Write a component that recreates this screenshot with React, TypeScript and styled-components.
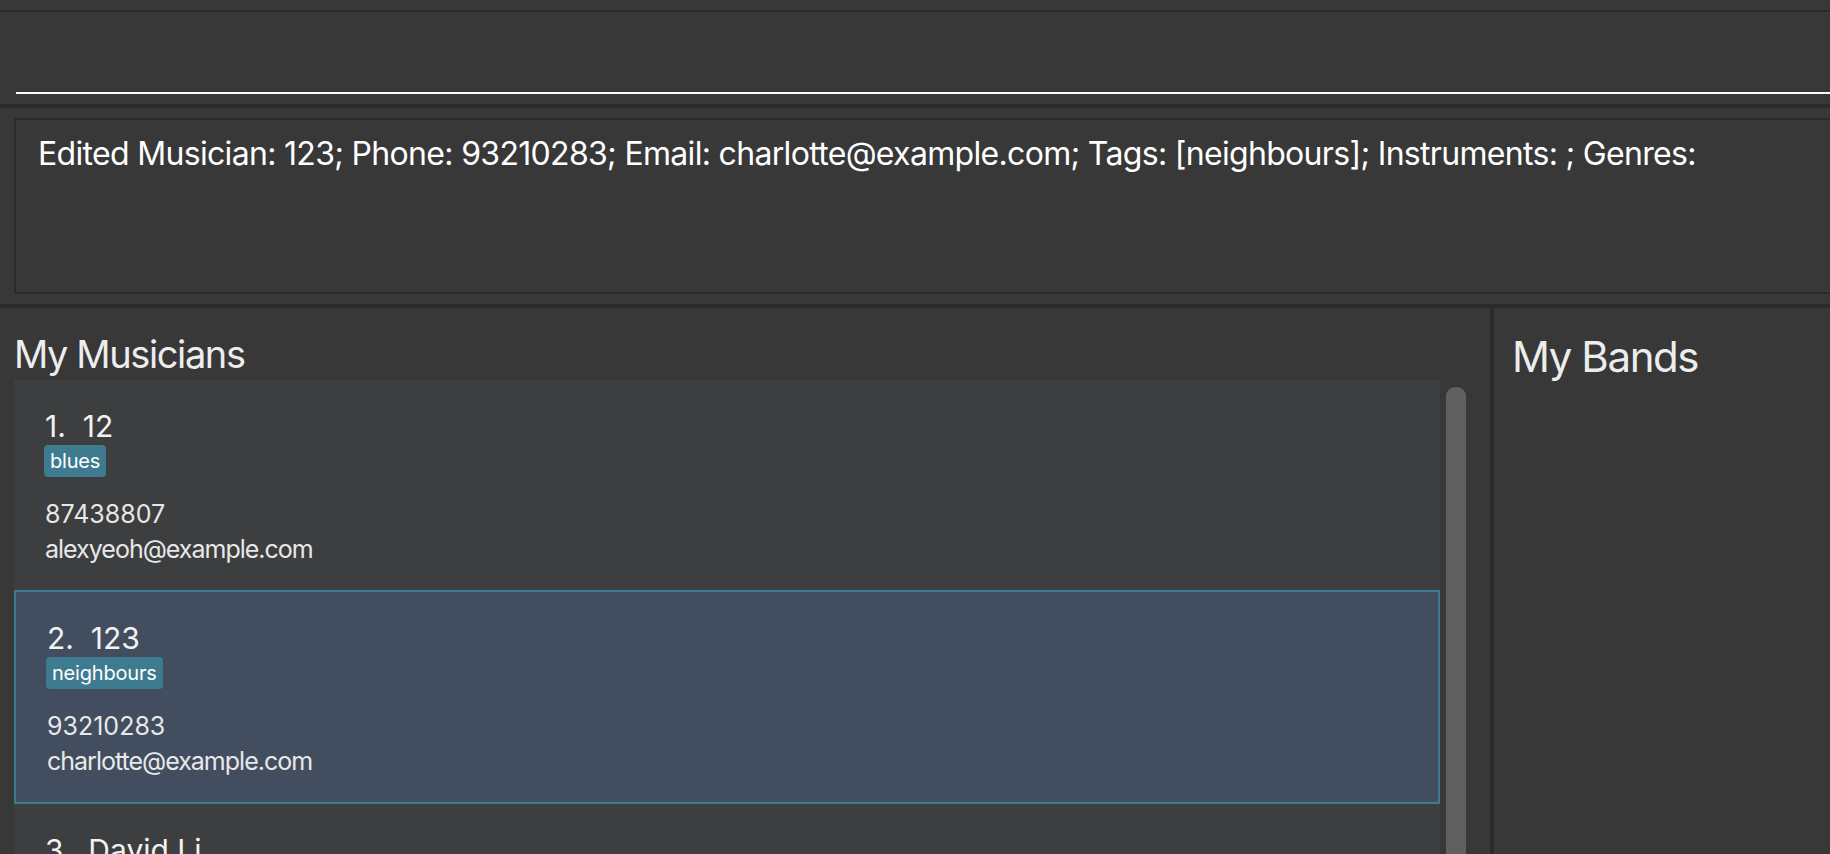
import React from "react";
import styled, { createGlobalStyle } from "styled-components";

const GlobalStyle = createGlobalStyle`
  html, body {
    margin: 0;
    padding: 0;
    background: #383838;
    overflow: hidden;
  }
  body {
    font-family: Inter, "Noto Sans", sans-serif;
  }
`;

const Window = styled.div`
  width: 1860px;
  height: 854px;
  display: flex;
  flex-direction: column;
  background: #383838;
  color: #ffffff;
  overflow: hidden;
`;

const MenuStrip = styled.div`
  flex: none;
  height: 10px;
  border-bottom: 2px solid #2b2b2b;
`;

const CommandSection = styled.div`
  flex: none;
  height: 92px;
  box-sizing: border-box;
  padding: 0 0 10px 16px;
  display: flex;
  align-items: flex-end;
`;

const CommandInput = styled.input`
  flex: 1;
  height: 40px;
  padding: 0;
  background: transparent;
  border: none;
  border-bottom: 2px solid #ffffff;
  outline: none;
  color: #ffffff;
  font: 24px Inter, sans-serif;
`;

const Separator = styled.div`
  flex: none;
  height: 4px;
  background: #2b2b2b;
`;

const ResultSection = styled.div`
  flex: none;
  height: 196px;
  box-sizing: border-box;
  padding: 10px 0 10px 14px;
  display: flex;
`;

const ResultBox = styled.div`
  flex: 1;
  border: 2px solid #2b2b2b;
  padding: 14px 22px;
  font-size: 32px;
  line-height: 40px;
  letter-spacing: -0.68px;
  color: #ffffff;
  white-space: nowrap;
`;

const MainSplit = styled.div`
  flex: 1;
  display: flex;
  min-height: 0;
`;

const MusicianPane = styled.section`
  flex: none;
  width: 1490px;
  box-sizing: border-box;
  padding-left: 14px;
  display: flex;
  flex-direction: column;
  min-height: 0;
`;

const PaneTitle = styled.h2<{ $size: number }>`
  margin: 0;
  font-weight: 400;
  font-size: ${(p) => p.$size}px;
  line-height: ${(p) => p.$size + 8}px;
  letter-spacing: -1.4px;
  color: #ededed;
`;

const MusicianTitle = styled(PaneTitle)`
  padding-top: 23px;
  margin-bottom: 3px;
`;

const BandTitle = styled(PaneTitle)`
  padding-top: 24px;
`;

const ListArea = styled.div`
  flex: 1;
  display: flex;
  gap: 6px;
  min-height: 0;
`;

const CardColumn = styled.div`
  flex: none;
  width: 1426px;
  display: flex;
  flex-direction: column;
  background: #3c3e3f;
  overflow: hidden;
`;

const ScrollThumb = styled.div`
  flex: none;
  width: 20px;
  margin-top: 7px;
  background: #606060;
  border-radius: 9px 9px 0 0;
`;

const Card = styled.div<{ $selected?: boolean }>`
  flex: none;
  padding: 28px 0 23px 31px;
  background: ${(p) => (p.$selected ? "#424d5f" : "#3c3e3f")};
  border: ${(p) => (p.$selected ? "2px solid #3e7b91" : "none")};
  display: flex;
  flex-direction: column;
  align-items: flex-start;
`;

const NameLine = styled.div`
  font-size: 30px;
  line-height: 36px;
  letter-spacing: 0px;
  color: #f2f2f2;
  white-space: pre;
`;

const TagRow = styled.div`
  display: flex;
  gap: 6px;
  margin: 1px 0 0 -1px;
`;

const Tag = styled.span`
  height: 32px;
  display: flex;
  align-items: center;
  padding: 0 6px;
  border-radius: 4px;
  background: #3e7b91;
  color: #ffffff;
  font-size: 20px;
  letter-spacing: -0.2px;
`;

const DetailLine = styled.div<{ $first?: boolean; $tracking: number }>`
  margin-top: ${(p) => (p.$first ? "20px" : "0")};
  font-size: 25px;
  line-height: 35px;
  letter-spacing: ${(p) => p.$tracking}px;
  color: #e8e8e8;
`;

const PaneDivider = styled.div`
  flex: none;
  width: 4px;
  background: #2b2b2b;
`;

const BandPane = styled.section`
  flex: 1;
  padding-left: 18px;
`;

type Musician = {
  name: string;
  tags: string[];
  phone: string;
  email: string;
};

const musicians: Musician[] = [
  { name: "12", tags: ["blues"], phone: "87438807", email: "alexyeoh@example.com" },
  { name: "123", tags: ["neighbours"], phone: "93210283", email: "charlotte@example.com" },
  { name: "David Li", tags: ["family"], phone: "91031282", email: "lidavid@example.com" },
];

export default function App() {
  return (
    <>
      <GlobalStyle />
      <Window>
        <MenuStrip />
        <CommandSection>
          <CommandInput type="text" defaultValue="" />
        </CommandSection>
        <Separator />
        <ResultSection>
          <ResultBox>
            Edited Musician: 123; Phone: 93210283; Email: charlotte@example.com; Tags: [neighbours]; Instruments: ; Genres:
          </ResultBox>
        </ResultSection>
        <Separator />
        <MainSplit>
          <MusicianPane>
            <MusicianTitle $size={38}>My Musicians</MusicianTitle>
            <ListArea>
              <CardColumn>
                {musicians.map((m, i) => (
                  <Card key={m.name} $selected={i === 1}>
                    <NameLine>{`${i + 1}.  ${m.name}`}</NameLine>
                    <TagRow>
                      {m.tags.map((t) => (
                        <Tag key={t}>{t}</Tag>
                      ))}
                    </TagRow>
                    <DetailLine $first $tracking={0}>
                      {m.phone}
                    </DetailLine>
                    <DetailLine $tracking={-1}>{m.email}</DetailLine>
                  </Card>
                ))}
              </CardColumn>
              <ScrollThumb />
            </ListArea>
          </MusicianPane>
          <PaneDivider />
          <BandPane>
            <BandTitle $size={42}>My Bands</BandTitle>
          </BandPane>
        </MainSplit>
      </Window>
    </>
  );
}
